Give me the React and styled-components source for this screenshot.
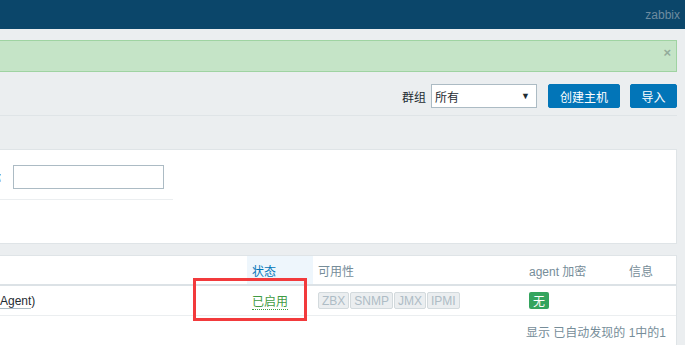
import React from 'react';
import styled, {createGlobalStyle} from 'styled-components';

const GlobalStyle = createGlobalStyle`
    body {
        margin: 0;
        background: #ebeef0;
        font-family: "Liberation Sans", Arial, "Noto Sans CJK SC", sans-serif;
        font-size: 12px;
        color: #1f2c33;
        overflow: hidden;
    }
`;

const Header = styled.header`
    height: 29px;
    background: #0b466a;
    display: flex;
    align-items: center;
    justify-content: flex-end;
    padding-right: 5px;
    color: #6e8ca0;
    font-size: 12px;
`;

const Main = styled.main`
    padding: 11px 8px 0 0;
`;

const Message = styled.div`
    box-sizing: border-box;
    height: 32px;
    background: #c5e4c7;
    border: 1px solid #9fd3a2;
    border-left: none;
    position: relative;
`;

const Close = styled.span`
    position: absolute;
    right: 5px;
    top: 4px;
    color: #93ab9a;
    font-size: 13px;
    font-weight: bold;
`;

const Toolbar = styled.div`
    margin-top: 12px;
    display: flex;
    justify-content: flex-end;
    align-items: center;
    padding-bottom: 7px;
    border-bottom: 1px solid #dfe4e7;
`;

const GroupLabel = styled.span`
    margin-right: 5px;
    font-size: 12px;
`;

const Select = styled.div`
    box-sizing: border-box;
    width: 106px;
    height: 24px;
    background: #fff;
    border: 1px solid #acbbc4;
    display: flex;
    align-items: center;
    justify-content: space-between;
    padding: 0 6px 0 3px;
    margin-right: 11px;
    span:last-child {
        font-size: 9px;
    }
`;

const Button = styled.button`
    box-sizing: border-box;
    height: 24px;
    width: ${({w}) => w}px;
    margin-left: ${({gap}) => gap || 0}px;
    background: #0275b8;
    border: 1px solid #0275b8;
    border-radius: 2px;
    color: #fff;
    font-family: inherit;
    font-size: 12px;
    padding: 0;
`;

const FilterPanel = styled.section`
    box-sizing: border-box;
    margin-top: 33px;
    height: 95px;
    background: #fff;
    border: 1px solid #dfe4e7;
    border-left: none;
    padding-top: 15px;
`;

const FilterRow = styled.div`
    display: flex;
    align-items: center;
    width: 173px;
    padding-bottom: 10px;
    border-bottom: 1px solid #ebeef0;
`;

const FieldLabel = styled.label`
    margin-left: -23px;
    margin-right: 12px;
    white-space: nowrap;
`;

const Input = styled.div`
    box-sizing: border-box;
    width: 151px;
    height: 24px;
    border: 1px solid #acbbc4;
    background: #fff;
`;

const TablePanel = styled.section`
    position: relative;
    margin-top: 11px;
    background: #fff;
    border: 1px solid #dfe4e7;
    border-left: none;
    border-bottom: none;
    height: 89px;
`;

const Table = styled.table`
    width: 676px;
    table-layout: fixed;
    border-collapse: collapse;
`;

const Th = styled.th`
    height: 28px;
    padding: 0 0 0 5px;
    text-align: left;
    font-weight: normal;
    color: ${({active}) => (active ? '#0275b8' : '#768d99')};
    background: ${({active}) => (active ? '#eef6fc' : 'transparent')};
    border-bottom: 2px solid #dce2e6;
    white-space: nowrap;
`;

const Td = styled.td`
    height: 29px;
    padding: 0 0 0 ${({pad}) => (pad === undefined ? 5 : pad)}px;
    border-bottom: 1px solid #ebeef0;
    white-space: nowrap;
`;

const Link = styled.span`
    border-bottom: 1px solid #acbbc4;
    color: #1f2c33;
`;

const Status = styled.span`
    color: #3f9b43;
    border-bottom: 1px dotted #3f9b43;
`;

const Interfaces = styled.div`
    display: inline-flex;
    gap: 1px;
    vertical-align: middle;
`;

const Iface = styled.span`
    box-sizing: border-box;
    height: 17px;
    padding: 0 3px;
    display: flex;
    align-items: center;
    background: #ebeef0;
    border: 1px solid #d3dadd;
    border-radius: 2px;
    color: #aebcc5;
    font-size: 12px;
`;

const Badge = styled.span`
    display: inline-flex;
    align-items: center;
    justify-content: center;
    width: 20px;
    height: 17px;
    border-radius: 2px;
    background: #34a45e;
    color: #fff;
    font-size: 12px;
    vertical-align: middle;
`;

const Footer = styled.div`
    text-align: right;
    color: #768d99;
    padding: 7px 10px 0 0;
`;

const Highlight = styled.div`
    position: absolute;
    left: 193px;
    top: 22px;
    width: 114px;
    height: 43px;
    box-sizing: border-box;
    border: 3px solid #f23a3c;
`;

export default function App() {
    return (
        <>
            <GlobalStyle />
            <Header>zabbix</Header>
            <Main>
                <Message>
                    <Close>×</Close>
                </Message>
                <Toolbar>
                    <GroupLabel>群组</GroupLabel>
                    <Select>
                        <span>所有</span>
                        <span>▼</span>
                    </Select>
                    <Button w={72}>创建主机</Button>
                    <Button w={47} gap={10}>导入</Button>
                </Toolbar>
                <FilterPanel>
                    <FilterRow>
                        <FieldLabel>名称</FieldLabel>
                        <Input />
                    </FilterRow>
                </FilterPanel>
                <TablePanel>
                    <Table>
                        <colgroup>
                            <col style={{width: 247}} />
                            <col style={{width: 66}} />
                            <col style={{width: 211}} />
                            <col style={{width: 100}} />
                            <col style={{width: 52}} />
                        </colgroup>
                        <thead>
                            <tr>
                                <Th />
                                <Th active>状态</Th>
                                <Th>可用性</Th>
                                <Th>agent 加密</Th>
                                <Th>信息</Th>
                            </tr>
                        </thead>
                        <tbody>
                            <tr>
                                <Td pad={0}>
                                    <Link>Agent</Link>)
                                </Td>
                                <Td>
                                    <Status>已启用</Status>
                                </Td>
                                <Td>
                                    <Interfaces>
                                        <Iface>ZBX</Iface>
                                        <Iface>SNMP</Iface>
                                        <Iface>JMX</Iface>
                                        <Iface>IPMI</Iface>
                                    </Interfaces>
                                </Td>
                                <Td>
                                    <Badge>无</Badge>
                                </Td>
                                <Td />
                            </tr>
                        </tbody>
                    </Table>
                    <Footer>显示 已自动发现的 1中的1</Footer>
                    <Highlight />
                </TablePanel>
            </Main>
        </>
    );
}
